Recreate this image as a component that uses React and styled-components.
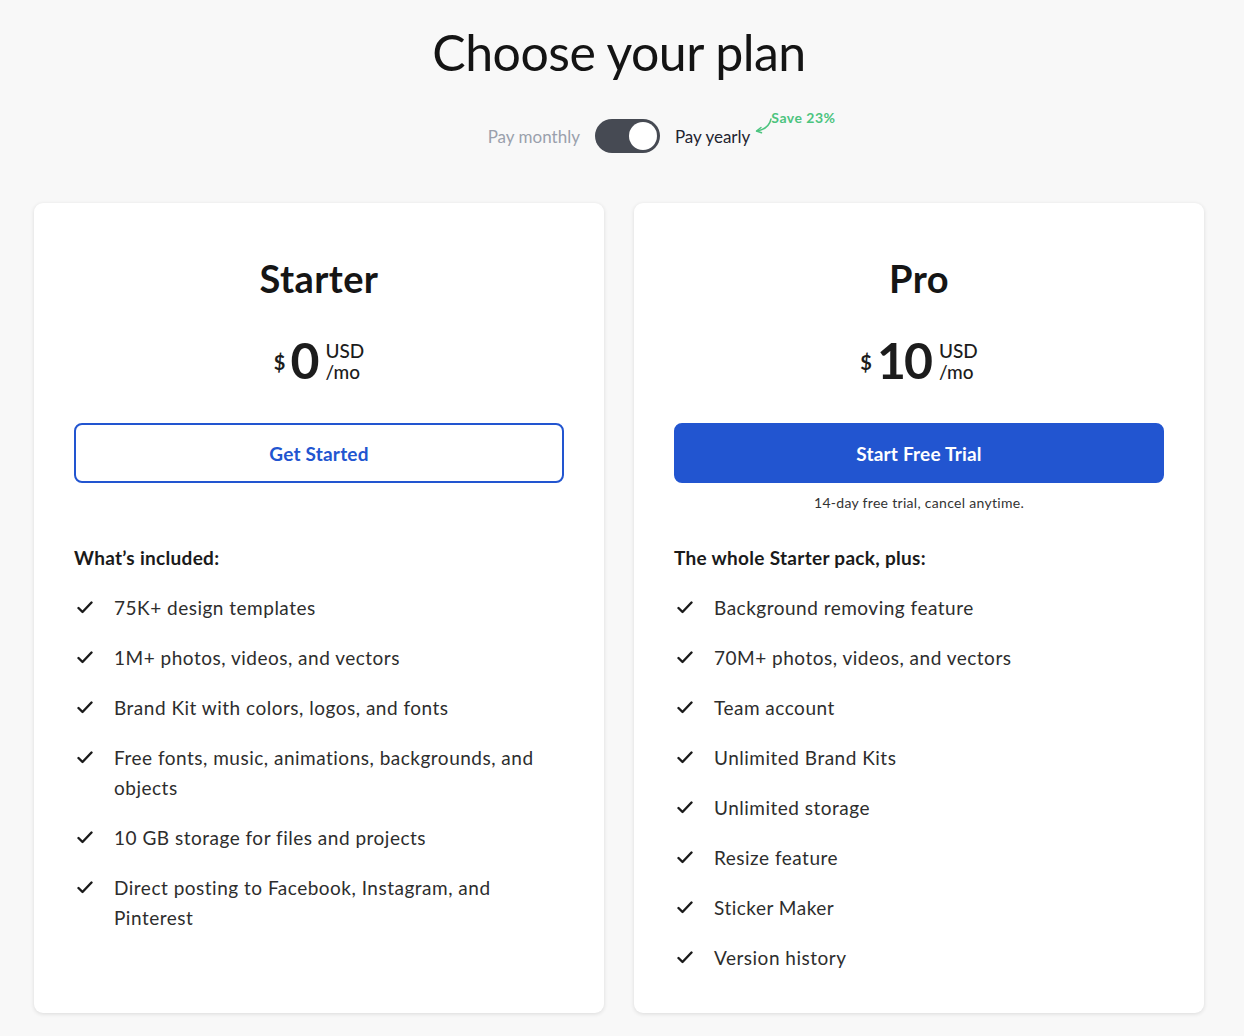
import React from 'react';
import styled, { createGlobalStyle } from 'styled-components';

const GlobalStyle = createGlobalStyle`
    * { box-sizing: border-box; }
    body {
        margin: 0;
        background: #f8f8f8;
        font-family: Lato, "Noto Sans", Arial, sans-serif;
        color: #1c1c1c;
    }
`;

const Page = styled.div`
    display: flex;
    flex-direction: column;
    align-items: center;
    padding: 20px 40px 24px 34px;
`;

const Title = styled.h1`
    margin: 0;
    font-family: Lato, "Open Sans", sans-serif;
    font-weight: 400;
    font-size: 50px;
    line-height: 64px;
    letter-spacing: -0.5px;
    color: #141414;
`;

const ToggleRow = styled.div`
    display: flex;
    align-items: center;
    gap: 15px;
    margin-top: 35px;
`;

const ToggleLabel = styled.span`
    font-size: 17px;
    color: ${p => (p.$active ? '#1f2430' : '#9aa0ac')};
`;

const Yearly = styled.div`
    position: relative;
    display: flex;
    align-items: center;
`;

const Switch = styled.div`
    width: 65px;
    height: 34px;
    border-radius: 17px;
    background: #464a53;
    position: relative;

    &::after {
        content: '';
        position: absolute;
        right: 3px;
        top: 3px;
        width: 28px;
        height: 28px;
        border-radius: 50%;
        background: #fff;
    }
`;

const Save = styled.div`
    position: absolute;
    left: calc(100% + 21px);
    top: -17px;
    font-size: 14px;
    font-weight: 700;
    letter-spacing: 0.5px;
    color: #4cc47f;
    white-space: nowrap;
`;

const Arrow = styled.svg`
    position: absolute;
    left: -17px;
    top: 9px;
`;

const Cards = styled.div`
    display: grid;
    grid-template-columns: 1fr 1fr;
    gap: 30px;
    width: 100%;
    margin-top: 50px;
`;

const Card = styled.div`
    background: #fff;
    border-radius: 9px;
    box-shadow: 0 1px 4px rgba(0, 0, 0, 0.12);
    padding: 51px 40px 40px;
    min-height: 808px;
    display: flex;
    flex-direction: column;
`;

const PlanName = styled.h2`
    margin: 0;
    text-align: center;
    font-size: 38px;
    font-weight: 700;
    letter-spacing: 0.4px;
    line-height: 48px;
    color: #151515;
`;

const Price = styled.div`
    display: flex;
    justify-content: center;
    align-items: center;
    margin-top: 35px;
    height: 46px;
`;

const Dollar = styled.span`
    font-size: 20px;
    font-weight: 700;
    margin-right: 5px;
    margin-top: 4px;
`;

const Amount = styled.span`
    font-size: 50px;
    font-weight: 700;
    line-height: 46px;
    letter-spacing: -2px;
    margin-right: 8px;
`;

const Unit = styled.span`
    display: flex;
    flex-direction: column;
    font-size: 19px;
    line-height: 21px;
    font-weight: 500;
    margin-top: 2px;
`;

const Button = styled.button`
    margin-top: 40px;
    height: 60px;
    width: 100%;
    border-radius: 8px;
    border: 2px solid #2255d0;
    background: ${p => (p.$primary ? '#2255d0' : '#fff')};
    color: ${p => (p.$primary ? '#fff' : '#2255d0')};
    font-family: inherit;
    font-size: 19px;
    font-weight: 700;
    letter-spacing: 0.2px;
    cursor: pointer;
`;

const Note = styled.p`
    margin: 12px 0 0;
    text-align: center;
    font-size: 14px;
    letter-spacing: 0.3px;
    line-height: 16px;
    color: #333;
`;

const Included = styled.h3`
    margin: ${p => (p.$afterNote ? '35px' : '63px')} 0 0;
    font-size: 19px;
    font-weight: 700;
    letter-spacing: 0.3px;
    line-height: 24px;
    color: #1a1a1a;
`;

const List = styled.ul`
    list-style: none;
    margin: 23px 0 0;
    padding: 0;
    display: flex;
    flex-direction: column;
    gap: 20px;
`;

const Item = styled.li`
    display: flex;
    align-items: flex-start;
    gap: 21px;
    font-size: 19px;
    letter-spacing: 0.5px;
    line-height: 30px;
    color: #2d2d2d;
`;

const Check = styled.svg`
    flex: none;
    margin-top: 8px;
    margin-left: 3px;
`;

const plans = [
    {
        name: 'Starter',
        amount: '0',
        button: 'Get Started',
        heading: 'What’s included:',
        features: [
            '75K+ design templates',
            '1M+ photos, videos, and vectors',
            'Brand Kit with colors, logos, and fonts',
            'Free fonts, music, animations, backgrounds, and objects',
            '10 GB storage for files and projects',
            'Direct posting to Facebook, Instagram, and Pinterest',
        ],
    },
    {
        name: 'Pro',
        amount: '10',
        button: 'Start Free Trial',
        primary: true,
        note: '14-day free trial, cancel anytime.',
        heading: 'The whole Starter pack, plus:',
        features: [
            'Background removing feature',
            '70M+ photos, videos, and vectors',
            'Team account',
            'Unlimited Brand Kits',
            'Unlimited storage',
            'Resize feature',
            'Sticker Maker',
            'Version history',
        ],
    },
];

function CheckIcon() {
    return (
        <Check width="16" height="13" viewBox="0 0 16 13">
            <path d="M1.5 7 L5.5 11 L14.5 1.5" fill="none" stroke="#1a1a1a" strokeWidth="2.4" strokeLinecap="round" strokeLinejoin="round" />
        </Check>
    );
}

export default function App() {
    return (
        <Page>
            <GlobalStyle />
            <Title>Choose your plan</Title>
            <ToggleRow>
                <ToggleLabel>Pay monthly</ToggleLabel>
                <Switch />
                <Yearly>
                    <ToggleLabel $active>Pay yearly</ToggleLabel>
                    <Save>
                        <Arrow width="19" height="16" viewBox="0 0 19 16">
                            <path d="M17 1 C15.5 8 11 11.5 3 13" fill="none" stroke="#4cc47f" strokeWidth="1.5" strokeLinecap="round" />
                            <path d="M7 9.5 L2.5 13 L7.5 14.8" fill="none" stroke="#4cc47f" strokeWidth="1.5" strokeLinecap="round" strokeLinejoin="round" />
                        </Arrow>
                        Save 23%
                    </Save>
                </Yearly>
            </ToggleRow>
            <Cards>
                {plans.map(plan => (
                    <Card key={plan.name}>
                        <PlanName>{plan.name}</PlanName>
                        <Price>
                            <Dollar>$</Dollar>
                            <Amount>{plan.amount}</Amount>
                            <Unit>
                                <span>USD</span>
                                <span>/mo</span>
                            </Unit>
                        </Price>
                        <Button $primary={plan.primary}>{plan.button}</Button>
                        {plan.note && <Note>{plan.note}</Note>}
                        <Included $afterNote={!!plan.note}>{plan.heading}</Included>
                        <List>
                            {plan.features.map(f => (
                                <Item key={f}>
                                    <CheckIcon />
                                    <span>{f}</span>
                                </Item>
                            ))}
                        </List>
                    </Card>
                ))}
            </Cards>
        </Page>
    );
}
